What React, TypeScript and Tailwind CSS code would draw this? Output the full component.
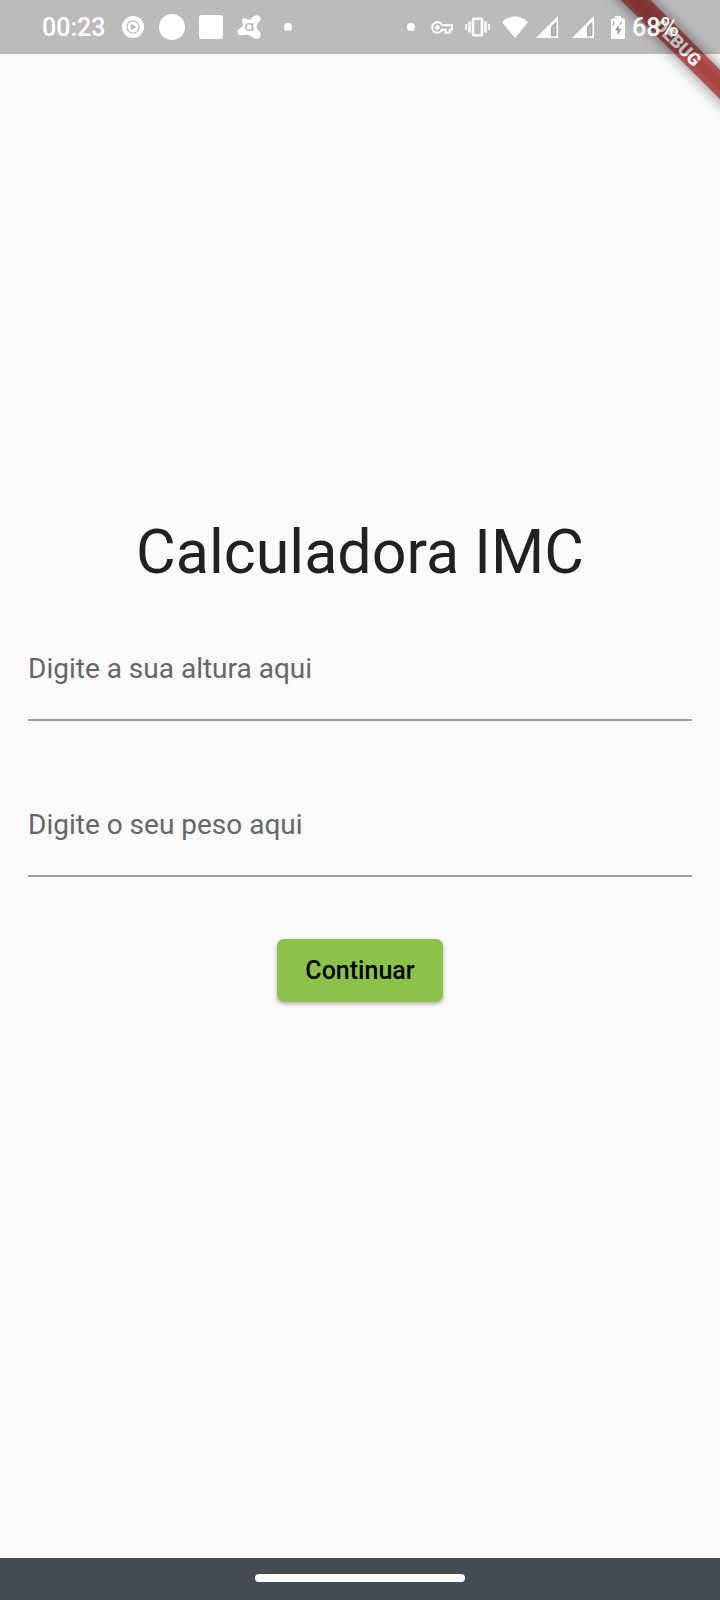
import React from "react";

function SignalIcon() {
  return (
    <svg viewBox="0 0 22 22" className="h-[22px] w-[22px]" aria-hidden="true">
      <path fill="#fff" fillRule="evenodd" d="M22 0V22H0ZM20.3 5.6L15 11V20.3H20.3Z" />
      <path fill="#999" d="M20.300 5.600L15 11V20.300H20.300Z" opacity="0.6" />
      <path fill="#bbb" d="M18.800 9.300L16.500 11.700V19H18.800Z" />
    </svg>
  );
}

function StatusBar() {
  return (
    <header className="relative z-10 flex h-[54px] items-center justify-between bg-black/25 pl-[42px] pr-[42px] text-white">
      <div className="flex items-center">
        <time className="w-[65px] pt-0.5 text-[25px] leading-8 font-medium">00:23</time>
        <svg viewBox="0 0 22 22" className="ml-[15px] h-[22px] w-[22px]" aria-hidden="true">
          <circle cx="11" cy="11" r="11" fill="#fff" />
          <circle cx="11" cy="11" r="6.1" fill="none" stroke="#bbb" strokeWidth="1.2" />
          <path d="M8.8 7.6L14.4 11L8.8 14.4Z" fill="#bbb" />
        </svg>
        <span className="ml-[15px] h-[26px] w-[26px] rounded-full bg-white" />
        <span className="ml-3.5 h-6 w-6 rounded-[3px] bg-white" />
        <svg viewBox="0 0 24 24" className="ml-3.5 h-6 w-6" aria-hidden="true">
          <path
            fill="#fff"
            d="M8 3.600C10 5.200 12.500 5.200 14.500 3.800C16 2.500 16.500 .4 19.500 .2C23.500 .2 24.800 4.200 22.500 6.500C20.500 8.300 19.500 9.500 19.700 12C20 14.500 21.800 15.500 23.300 17.800C25 21.500 21.800 24.500 18 23.700C15.500 22.800 14.500 20.800 11.500 20C8.500 19.300 6.500 20.400 3.500 20.200C.5 19.800 -.6 17 .7 15.200C2 13.600 4.800 13.200 5.800 10.800C6.500 8.800 5.200 7 5 5.200C5 2.800 6.700 2.400 8 3.600Z"
          />
          <circle cx="12" cy="12" r="3.300" fill="none" stroke="#bbb" strokeWidth="1.600" />
          <path d="M15.600 8V16" stroke="#bbb" strokeWidth="1.600" />
        </svg>
        <span className="ml-[23px] h-2 w-2 rounded-full bg-white" />
      </div>

      <div className="flex items-center">
        <span className="h-2 w-2 rounded-full bg-white" />
        <svg viewBox="0 0 22 13" className="ml-4 h-[13px] w-[22px]" aria-hidden="true">
          <path
            d="M11.300 4.200A5.300 5.300 0 1 0 11.300 8.700H14.500V11.800H18.700V8.700H21V4.200Z"
            fill="none"
            stroke="#fff"
            strokeWidth="2"
          />
          <circle cx="6.400" cy="6.500" r="2.200" fill="#fff" />
        </svg>
        <svg viewBox="0 0 25 20" className="ml-3 h-5 w-[25px]" fill="#fff" aria-hidden="true">
          <rect x="0" y="7" width="2.200" height="6" opacity=".8" />
          <rect x="3" y="4.500" width="3" height="11" opacity=".8" />
          <rect x="8" y="1.800" width="9" height="16.400" rx="1" fill="none" stroke="#fff" strokeWidth="2.600" />
          <rect x="19" y="4.500" width="3" height="11" opacity=".8" />
          <rect x="22.800" y="7" width="2.200" height="6" opacity=".8" />
        </svg>
        <svg viewBox="0 0 26 22" className="ml-3 h-[22px] w-[26px]" aria-hidden="true">
          <path fill="#fff" d="M13 22L0 6.300C7.500 -1.600 18.500 -1.600 26 6.300Z" />
        </svg>
        <span className="ml-2 flex gap-3.5">
          <SignalIcon />
          <SignalIcon />
        </span>
        <svg viewBox="0 0 14 23" className="ml-[17px] h-[23px] w-3.5" aria-hidden="true">
          <path
            fill="#fff"
            d="M4 0H10V2.500H12.500Q14 2.500 14 4V21.500Q14 23 12.500 23H1.500Q0 23 0 21.500V4Q0 2.500 1.500 2.500H4Z"
          />
          <path fill="#999" d="M7.700 9L3.800 14.300H6.500V19.500L10.500 12.700H7.700Z" />
          <path d="M3.200 5.500L1.800 9.500M10.800 5.500L8.800 9" stroke="#999" strokeWidth="1.100" />
        </svg>
        <span className="ml-[7px] w-[46px] pt-0.5 text-[25px] leading-8 font-medium">68%</span>
      </div>
    </header>
  );
}

function DebugBanner() {
  return (
    <div className="pointer-events-none absolute top-0 right-0 h-40 w-40 overflow-hidden">
      <div className="absolute top-8 right-[-78px] h-[21px] w-60 rotate-45">
        <div className="absolute inset-0 bg-black/50 blur-[7px]" />
        <div className="relative flex h-full items-center justify-center bg-[#b71c1c]/63 text-[18px] leading-none font-black text-white">
          DEBUG
        </div>
      </div>
    </div>
  );
}

type FieldProps = { id: string; label: string };

function Field({ id, label }: FieldProps) {
  return (
    <div className="flex flex-col text-[28px] leading-9">
      <label htmlFor={id} className="text-[#666]">
        {label}
      </label>
      <input
        id={id}
        type="text"
        inputMode="decimal"
        className="h-[34px] w-full border-b-2 border-[#9c9c9c] bg-transparent text-2xl text-[#212121] outline-none focus:border-[#8bc34a]"
      />
    </div>
  );
}

export default function App() {
  return (
    <div className="relative flex min-h-screen flex-col bg-[#fafafa] font-[Roboto,sans-serif]">
      <DebugBanner />
      <StatusBar />
      <main className="flex flex-1 flex-col justify-center px-7 pb-[94px]">
        <h1 className="text-center text-[61px] leading-[72px] text-[#212121]">Calculadora IMC</h1>
        <form className="mt-[63px] flex flex-col" onSubmit={(e) => e.preventDefault()}>
          <div className="flex flex-col gap-[86px]">
            <Field id="altura" label="Digite a sua altura aqui" />
            <Field id="peso" label="Digite o seu peso aqui" />
          </div>
          <button
            type="submit"
            className="mt-[62px] h-[63px] self-center rounded-[7px] bg-[#8bc34a] px-7 text-[25px] leading-8 font-medium text-black shadow-[0_2px_4px_rgba(0,0,0,0.3)]"
          >
            Continuar
          </button>
        </form>
      </main>
      <footer className="flex h-[42px] items-center justify-center bg-[#454d53] pb-0.5">
        <span className="h-2 w-[210px] rounded-full bg-white" />
      </footer>
    </div>
  );
}
